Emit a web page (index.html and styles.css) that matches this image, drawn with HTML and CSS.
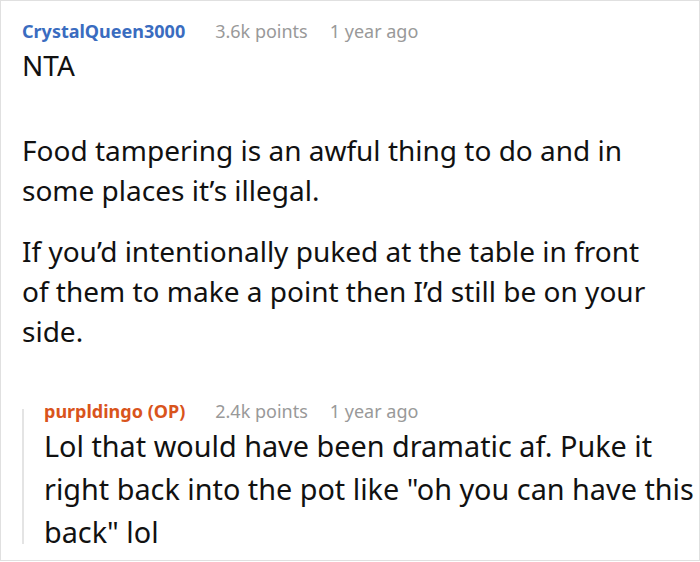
FILE: index.html
```html
<!DOCTYPE html>
<html>
<head>
<meta charset="utf-8">
<link rel="stylesheet" href="styles.css">
</head>
<body>
<div class="card">
  <div class="meta">
    <span class="author">CrystalQueen3000</span>
    <span class="points">3.6k points</span>
    <span class="time">1 year ago</span>
  </div>
  <div class="body main-body">
    <p class="lead">NTA</p>
    <p>Food tampering is an awful thing to do and in some places it’s illegal.</p>
    <p>If you’d intentionally puked at the table in front of them to make a point then I’d still be on your side.</p>
  </div>
  <div class="reply">
    <div class="meta reply-meta">
      <span class="author op">purpldingo (OP)</span>
      <span class="points">2.4k points</span>
      <span class="time">1 year ago</span>
    </div>
    <div class="body reply-body">
      <p>Lol that would have been dramatic af. Puke it right back into the pot like "oh you can have this back" lol</p>
    </div>
  </div>
</div>
</body>
</html>
```

FILE: styles.css
```css
html, body {
  margin: 0;
  padding: 0;
  background: #fff;
}
.card {
  box-sizing: border-box;
  width: 700px;
  height: 561px;
  border: 1px solid #e0e0e0;
  padding: 16px 0 0 21px;
  font-family: "Noto Sans", "Open Sans", sans-serif;
  color: #111;
  overflow: hidden;
}
.meta {
  display: flex;
  font-size: 18px;
  line-height: 28px;
}
.author {
  font-weight: 700;
  color: #3a6cc0;
  margin-right: 30px;
}
.author.op {
  color: #d9541c;
}
.points, .time {
  color: #999;
}
.points {
  margin-right: 22px;
}
.body {
  font-size: 28px;
  line-height: 40px;
}
.main-body {
  max-width: 640px;
}
.body p {
  margin: 0 0 21px 0;
}
.body p.lead {
  margin-bottom: 45px;
}
.reply {
  display: flow-root;
  margin-top: 58px;
  border-left: 2px solid #e4e4e4;
  padding-left: 20px;
}
.reply-meta {
  margin-top: -12px;
}
.reply-body {
  font-size: 28.8px;
  line-height: 43px;
  margin-top: -1px;
  margin-bottom: -9px;
}
.reply-body p {
  margin: 0;
}
```
